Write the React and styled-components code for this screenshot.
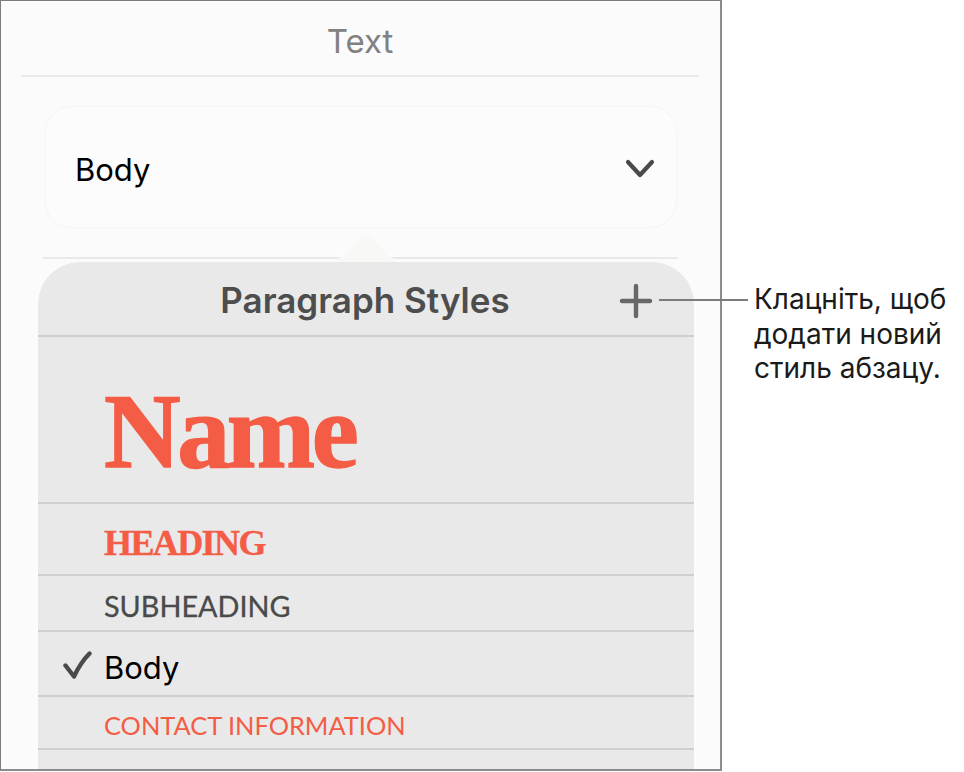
import React from "react";
import styled, { createGlobalStyle } from "styled-components";

const GlobalStyle = createGlobalStyle`
  html, body {
    margin: 0;
    padding: 0;
    background: #ffffff;
  }
  body {
    font-family: "Inter", "Liberation Sans", sans-serif;
  }
`;

const Page = styled.div`
  position: relative;
  width: 964px;
  height: 772px;
  overflow: hidden;
`;

const Frame = styled.div`
  box-sizing: border-box;
  width: 722px;
  height: 771px;
  background: #fbfbfb;
  border: 1px solid #7c7c7c;
  border-right: 2px solid #8c8c8c;
  border-bottom: 2px solid #8c8c8c;
  overflow: hidden;
`;

const TopBar = styled.div`
  box-sizing: border-box;
  height: 76px;
  margin: 0 21px 0 20px;
  border-bottom: 2px solid #e9e9e9;
  display: flex;
  align-items: center;
  justify-content: center;
  padding: 6px 0 0 0;
  font-size: 33px;
  color: #818181;
`;

const StyleCard = styled.div`
  box-sizing: border-box;
  height: 122px;
  margin: 29px 43px 0 44px;
  padding: 4px 20px 0 29px;
  display: flex;
  align-items: center;
  justify-content: space-between;
  background: #fcfcfc;
  border: 1px solid #f5f5f5;
  border-radius: 26px;
  font-size: 31px;
  color: #000000;
`;

const Divider = styled.div`
  height: 2px;
  margin: 29px 42px 0 42px;
  background: #e9e9e9;
`;

const Popover = styled.div`
  position: relative;
  margin: 3px 26px 0 37px;
  height: 520px;
  background: #e9e9e9;
  border-radius: 42px 42px 0 0;
`;

const Arrow = styled.svg`
  position: absolute;
  left: 292px;
  top: -29px;
  width: 76px;
  height: 29px;
`;

const PopoverHead = styled.div`
  position: relative;
  box-sizing: border-box;
  height: 75px;
  display: flex;
  align-items: center;
  justify-content: center;
  border-bottom: 2px solid #cfcfcf;
  padding: 3px 2px 0 0;
  font-size: 35px;
  font-weight: 600;
  color: #4d4d4d;
`;

const PlusIcon = styled.svg`
  position: absolute;
  left: 581px;
  top: 21px;
  width: 34px;
  height: 36px;
`;

const Row = styled.div`
  position: relative;
  box-sizing: border-box;
  height: ${(p) => p.$h}px;
  display: flex;
  align-items: center;
  padding: ${(p) => p.$drop || 0}px 0 0 66px;
  border-bottom: 2px solid #cfcfcf;
`;

const NameText = styled.span`
  font-family: "Liberation Serif", serif;
  font-weight: 700;
  font-size: 106px;
  letter-spacing: -3.4px;
  color: #f45c45;
  -webkit-text-stroke: 1.4px #f45c45;
`;

const HeadingText = styled.span`
  font-family: "Liberation Serif", serif;
  font-weight: 700;
  font-size: 36px;
  letter-spacing: -1.6px;
  color: #f45c45;
  -webkit-text-stroke: 0.4px #f45c45;
`;

const CapsText = styled.span`
  font-family: "Lato", sans-serif;
  font-size: ${(p) => p.$size}px;
  color: ${(p) => p.$color};
  -webkit-text-stroke: ${(p) => p.$stroke || 0}px ${(p) => p.$color};
`;

const BodyText = styled.span`
  font-size: 31px;
  color: #000000;
`;

const CheckIcon = styled.svg`
  position: absolute;
  left: 24px;
  top: 18px;
  width: 30px;
  height: 32px;
`;

const Callout = styled.div`
  position: absolute;
  left: 659px;
  top: 282px;
  display: flex;
  align-items: flex-start;
  gap: 6px;
`;

const LeaderLine = styled.div`
  width: 89px;
  height: 2px;
  margin-top: 17px;
  background: #7c7c7c;
`;

const CalloutText = styled.div`
  font-size: 28px;
  line-height: 34.5px;
  color: #1a1a1a;
  white-space: pre-line;
`;

export default function App() {
  return (
    <Page>
      <GlobalStyle />
      <Frame>
        <TopBar>Text</TopBar>
        <StyleCard>
          Body
          <svg width="32" height="22" viewBox="0 0 32 22">
            <path d="M4 4 L16 17 L28 4" fill="none" stroke="#4a4a4a" strokeWidth="4.2" strokeLinecap="round" strokeLinejoin="round" />
          </svg>
        </StyleCard>
        <Divider />
        <Popover>
          <Arrow viewBox="0 0 76 29">
            <path d="M3 29 C13 26 24 11 31 4 C34 1 40 1 43 4 C50 11 58 26 69 29" fill="#f8f8f7" stroke="#fdfdfd" strokeWidth="1" />
          </Arrow>
          <PopoverHead>
            Paragraph Styles
            <PlusIcon viewBox="0 0 34 36">
              <path d="M17 3 V33 M3 18 H31" fill="none" stroke="#686868" strokeWidth="4.4" strokeLinecap="round" />
            </PlusIcon>
          </PopoverHead>
          <Row $h={167} $drop={24}>
            <NameText>Name</NameText>
          </Row>
          <Row $h={72} $drop={8}>
            <HeadingText>HEADING</HeadingText>
          </Row>
          <Row $h={56} $drop={6}>
            <CapsText $size={28.8} $color="#4a4a4a" $stroke={0.3}>SUBHEADING</CapsText>
          </Row>
          <Row $h={65} $drop={8}>
            <CheckIcon viewBox="0 0 30 32">
              <path d="M3.5 15.5 L12 26.5 C16 18 21 10 27.5 3.5" fill="none" stroke="#4a4a4a" strokeWidth="4.4" strokeLinecap="round" strokeLinejoin="round" />
            </CheckIcon>
            <BodyText>Body</BodyText>
          </Row>
          <Row $h={53} $drop={4}>
            <CapsText $size={25.4} $color="#f45c45">CONTACT INFORMATION</CapsText>
          </Row>
        </Popover>
      </Frame>
      <Callout>
        <LeaderLine />
        <CalloutText>{"Клацніть, щоб\nдодати новий\nстиль абзацу."}</CalloutText>
      </Callout>
    </Page>
  );
}
